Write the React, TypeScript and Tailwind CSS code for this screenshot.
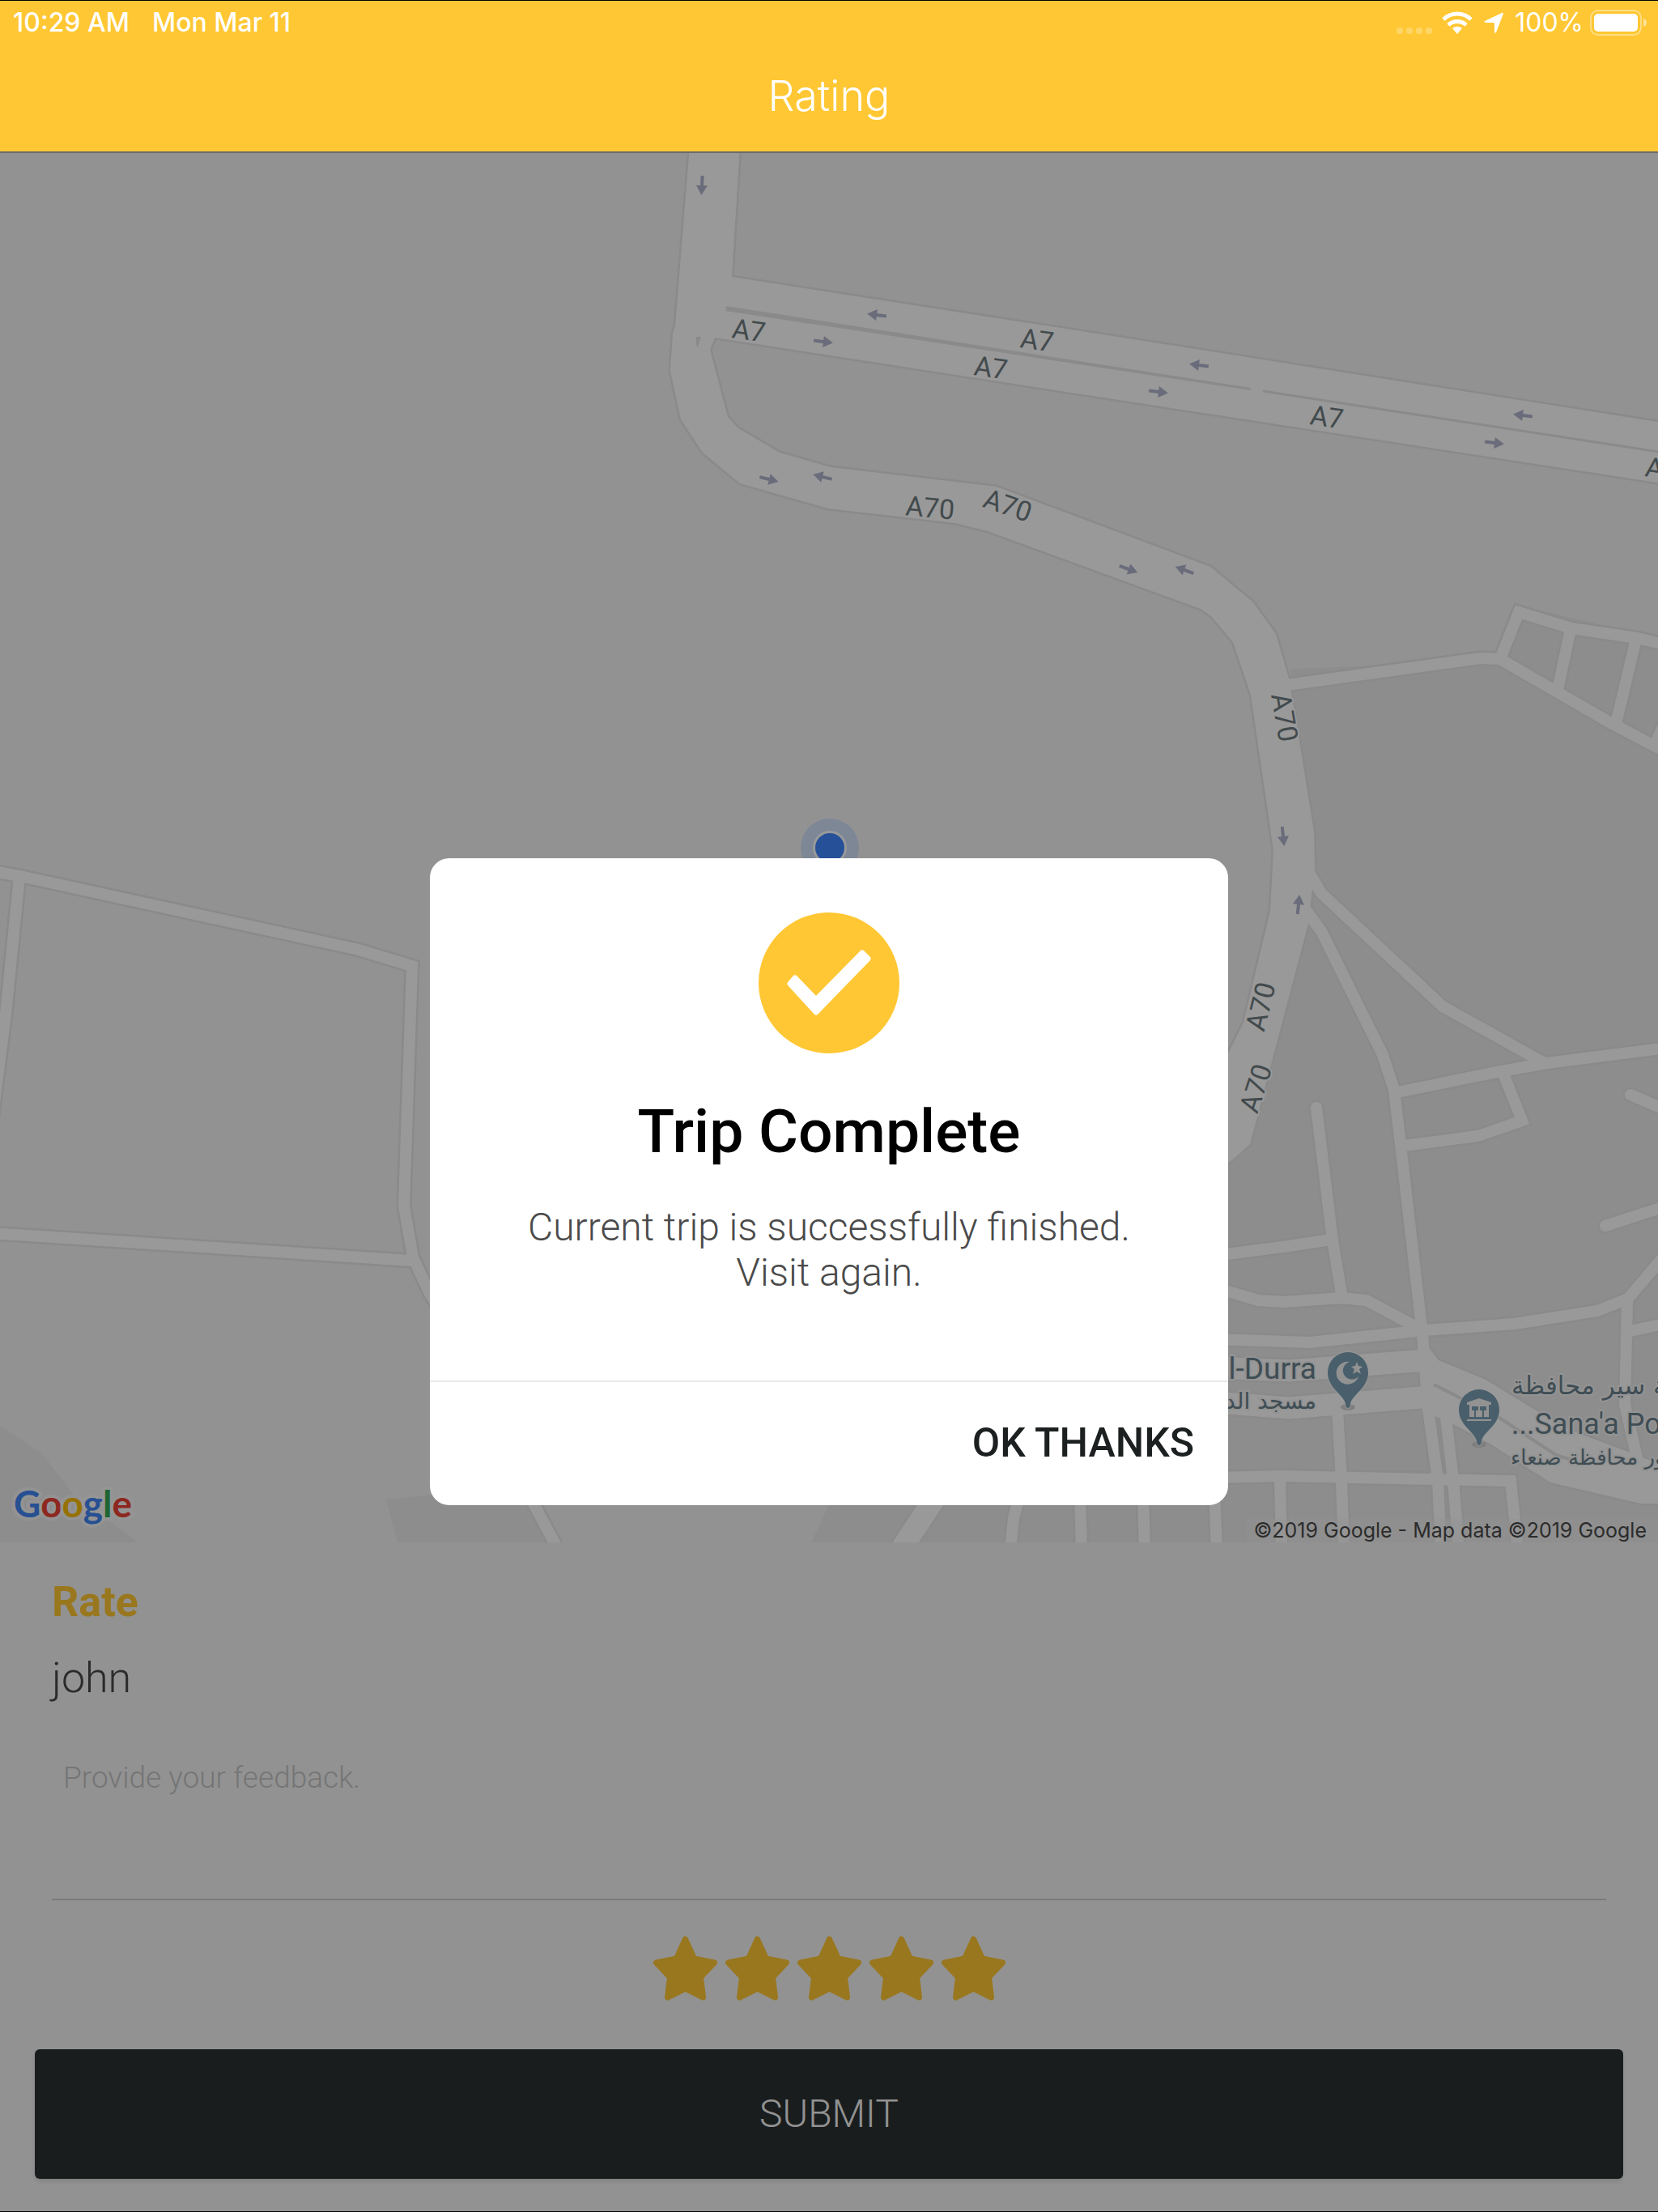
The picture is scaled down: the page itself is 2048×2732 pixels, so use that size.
import { useState } from 'react';

// Minor streets, drawn as a casing line with a white line on top
const streets = [
    'M-10 1076 L25 1082 L443 1173 L509 1193 L499 1489 L510 1553 L531 1598 L570 1660',
    'M24 1082 L7 1253 L-10 1385',
    'M-10 1523 L508 1557',
    'M650 1840 L690 1915',
    'M1582 847 L1828 813 L1853 814 L1988 892 L2060 930',
    'M1853 814 L1876 756 L1941 776 L2022 788 L2060 797',
    'M1940 777 L1924 852',
    'M2021 789 L1996 894',
    'M2062 880 L2044 920',
    'M1610 1066 L1632 1103 L1782 1243 L1906 1312',
    'M1610 1120 L1632 1150 L1708 1303 L1722 1346 L1731 1422 L1757 1648 L1764 1740 L1776 1828 L1780 1915',
    'M1726 1349 L1849 1324 L1911 1313 L2060 1294',
    'M1857 1326 L1880 1384 L1826 1403 L1734 1415',
    'M2014 1352 L2060 1372',
    'M1983 1514 L2060 1489',
    'M1626 1368 L1646 1532 L1658 1604',
    'M1500 1551 L1592 1539 L1644 1531',
    'M1500 1590 L1554 1606 L1585 1608 L1657 1603 L1688 1606 L1757 1643',
    'M1500 1654 L1618 1658 L1759 1643 L1871 1635 L1973 1619 L2011 1604 L2060 1546',
    'M2010 1608 L2007 1735 L2022 1800',
    'M2014 1644 L2060 1634',
    'M1500 1825 L1581 1823 L1866 1829 L1875 1915',
    'M1500 1840 L1503 1915',
    'M1581 1825 L1583 1915',
    'M1652 1740 L1657 1828 L1660 1915',
    'M1786 1750 L1795 1828 L1802 1915',
    'M1260 1845 L1252 1875 L1248 1915',
    'M1334 1845 L1336 1915',
    'M1412 1845 L1414 1915',
];

const avenues = ['M1500 1689 L1592 1693 L1762 1680', 'M1500 1732 L1592 1739 L1768 1725', 'M1165 1835 L1112 1915'];

const highway =
    'M852 180 L834 403 L831 412 L828 458 L841 518 L868 559 L914 597 L1023 628 L1180 646 L1220 656 L1483 752 L1496 761 L1523 793 L1545 858 L1573 1050 L1569 1125 L1536 1263 L1500 1335 L1500 1452 L1544 1413 L1616 1141 L1624 1072 L1623 1027 L1605 916 L1592 838 L1576 783 L1547 743 L1495 700 L1231 601 L1026 577 L963 559 L912 529 L899 515 L877 432 L883 417 L1480 509 L2060 598 L2060 523 L1400 419 L904 342 L914 180 Z';

const lowerHighway =
    'M1750 1668 L1766 1666 L1777 1680 L1835 1704 L1889 1737 L1944 1768 L2016 1795 L2060 1812 L2060 1857 L2027 1857 L1915 1831 L1842 1784 L1795 1759 L1768 1747 Z';

const arrows = [
    [867, 229, 93], [1083, 389, 187], [1017, 422, 7], [1481, 451, 187], [1431, 484, 7],
    [1881, 513, 187], [1846, 547, 7], [950, 592, 14], [1016, 589, 194], [1394, 703, 20],
    [1463, 704, 200], [1585, 1033, 84], [1604, 1117, 276],
];

const roadLabels: [string, number, number, number][] = [
    ['A7', 925, 408, 8], ['A7', 1281, 420, 8], ['A7', 1224, 454, 8], ['A7', 1639, 515, 8], ['A7', 2053, 579, 8],
    ['A70', 1149, 627, 5], ['A70', 1245, 624, 19], ['A70', 1587, 886, 80], ['A70', 1557, 1243, -76], ['A70', 1551, 1344, -72],
];

function Pin({ x, y, children }: { x: number; y: number; children: React.ReactNode }) {
    return (
        <g transform={`translate(${x} ${y})`}>
            <ellipse cx="0" cy="43" rx="9" ry="4" fill="#d2d2d2" />
            <path
                d="M0 44 C-2 44 -3 41 -3 39 C-5 27 -25 20 -25 0 A25 25 0 0 1 25 0 C25 20 5 27 3 39 C3 41 2 44 0 44 Z"
                fill="#7b9eb2"
                stroke="#ffffff"
                strokeOpacity="0.5"
                strokeWidth="3"
                paintOrder="stroke"
            />
            {children}
        </g>
    );
}

function TripMap() {
    return (
        <svg viewBox="0 189 2048 1716" className="block w-full bg-[#f3f3f3] font-[Roboto,sans-serif]" role="img" aria-label="Map of the trip">
            <g fill="#ebebeb">
                <path d="M1594 826 L1681 823 L1850 805 L1876 748 L2048 788 V1905 H1002 L1024 1859 L1400 1700 L1616 1141 Z" />
                <path d="M0 1761 L51 1794 L89 1844 L171 1905 H0 Z" />
                <path d="M477 1852 L560 1844 L655 1850 L686 1905 H491 Z" />
            </g>
            <g fill="none" strokeLinecap="round" strokeLinejoin="miter">
                <g stroke="#e6e6e6">
                    {streets.map((d) => <path key={d} d={d} strokeWidth="19" />)}
                    {avenues.map((d) => <path key={d} d={d} strokeWidth="32" strokeLinecap="butt" />)}
                </g>
                <path d={highway} stroke="#e6e6e6" strokeWidth="5" />
                <path d={lowerHighway} stroke="#e6e6e6" strokeWidth="5" />
                <g stroke="#ffffff">
                    <path d={highway} fill="#ffffff" stroke="none" />
                    <path d={lowerHighway} fill="#ffffff" stroke="none" />
                    {streets.map((d) => <path key={d} d={d} strokeWidth="14" />)}
                    {avenues.map((d) => <path key={d} d={d} strokeWidth="27" strokeLinecap="butt" />)}
                </g>
                <path d="M1771 1710 L1852 1751 L1922 1797 L1950 1806" stroke="#e6e6e6" strokeWidth="4" strokeLinecap="butt" />
                <path d="M1560 483 L2048 558" stroke="#e6e6e6" strokeWidth="3" strokeLinecap="butt" />
                <path d="M897 378 L1545 479 V482 L896 384 Z" fill="#e6e6e6" />
                <path d="M860 416 H866 L862 429 L860 426 Z" fill="#e6e6e6" />
            </g>

            {arrows.map(([x, y, angle]) => (
                <path
                    key={`${x}-${y}`}
                    d="M-12 -2 H0 V-7 L12 0 L0 7 V2 H-12 Z"
                    transform={`translate(${x} ${y}) rotate(${angle})`}
                    fill="#b1b5ce"
                />
            ))}
            <g fontSize="34" fill="#6f7c80" textAnchor="middle" stroke="#ffffff" strokeWidth="4" paintOrder="stroke">
                {roadLabels.map(([name, x, y, angle]) => (
                    <text key={`${x}-${y}`} y="12" transform={`translate(${x} ${y}) rotate(${angle})`}>{name}</text>
                ))}
            </g>

            <Pin x={1665} y={1695}>
                <path d="M13 5 A14 14 0 1 1 2 -13 A11 11 0 1 0 13 5 Z" fill="#f3f3f3" />
                <path d="M11 -13 L13 -8 L18 -7 L14 -4 L16 2 L11 -1 L6 2 L8 -4 L4 -7 L9 -8 Z" fill="#f3f3f3" />
            </Pin>
            <Pin x={1827} y={1741}>
                <g fill="#f3f3f3">
                    <path d="M-15 -9 L0 -14 L15 -9 V-6 H-15 Z" />
                    <path fillRule="evenodd" d="M-12 -6 H12 V9 H-12 Z M-9 -4 V1 H-6 V9 H-4 V1 H-1 V-4 Z M1 -4 V1 H4 V9 H6 V1 H9 V-4 Z" />
                    <path d="M-15 12 H15 V14 H-15 Z" />
                </g>
            </Pin>
            <g fill="#69808c" stroke="#f6f6f6" strokeWidth="4" paintOrder="stroke">
                <text x="1626" y="1703" fontSize="37" textAnchor="end">Al-Durra</text>
                <g className="font-['DejaVu_Sans',sans-serif]" direction="rtl">
                    <text x="1626" y="1740" fontSize="28">مسجد الدرة</text>
                    <text x="1867" y="1722" fontSize="31" textAnchor="end">شرطة سير محافظة</text>
                    <text x="1866" y="1809" fontSize="26" textAnchor="end">مرور محافظة صنعاء</text>
                </g>
                <text x="1867" y="1771" fontSize="36">...Sana'a Po</text>
            </g>

            <circle cx="1025" cy="1047" r="36" fill="#d2e2fb" />
            <circle cx="1025" cy="1047" r="21" fill="#ffffff" />
            <circle cx="1025" cy="1047" r="18" fill="#4088ff" />

            <text x="17" y="1874" fontSize="46" stroke="#ffffff" strokeOpacity="0.5" strokeWidth="8" paintOrder="stroke" className="font-[Lato,sans-serif] font-bold">
                <tspan fill="#4285f4">G</tspan>
                <tspan fill="#ea4335">o</tspan>
                <tspan fill="#fbbc05">o</tspan>
                <tspan fill="#4285f4">g</tspan>
                <tspan fill="#34a853">l</tspan>
                <tspan fill="#ea4335">e</tspan>
            </text>
            <rect x="1540" y="1876" width="508" height="29" fill="#f5f5f5" fillOpacity="0.4" />
            <text x="2034" y="1899" fontSize="25" textAnchor="end" fill="#4a4a4a" className="font-[Inter,sans-serif]">
                ©2019 Google - Map data ©2019 Google
            </text>
        </svg>
    );
}

function StatusBar() {
    return (
        <div className="flex h-[52px] items-center justify-between pt-1 pl-4 pr-3.5 pb-0.5 font-medium">
            <div className="flex gap-7 text-[32px]">
                <span>10:29 AM</span>
                <span>Mon Mar 11</span>
            </div>
            <div className="flex items-center text-[32px] font-normal">
                <svg width="44" height="28" viewBox="0 0 44 28" fill="#fff" fillOpacity="0.25" className="mr-3">
                    <rect x="0" y="20" width="8" height="8" rx="3" />
                    <rect x="12" y="20" width="8" height="8" rx="3" />
                    <rect x="24" y="20" width="8" height="8" rx="3" />
                    <rect x="36" y="20" width="8" height="8" rx="3" />
                </svg>
                <svg width="38" height="28" viewBox="0 0 38 28" fill="none" stroke="#fff" strokeWidth="5" className="mr-3.5">
                    <path d="M2 10 A24 24 0 0 1 36 10" />
                    <path d="M8 17 A16 16 0 0 1 30 17" />
                    <path d="M19 28 L13 21 A9 9 0 0 1 25 21 Z" fill="#fff" stroke="none" />
                </svg>
                <svg width="24" height="26" viewBox="0 0 24 26" fill="#fff" className="mr-3.5">
                    <path d="M22 1 Q24 0 24 2 L15 25 Q13 27 13 24 V14 Q13 13 12 13 H2 Q-1 12 1 11 Z" />
                </svg>
                <span className="mr-2">100%</span>
                <svg width="70" height="32" viewBox="0 0 70 32">
                    <rect x="1" y="1" width="62" height="30" rx="9" fill="none" stroke="#fff" strokeOpacity="0.4" strokeWidth="2" />
                    <rect x="5" y="5" width="54" height="22" rx="5" fill="#fff" />
                    <path d="M66 11 Q70 12 70 16 Q70 20 66 21 Z" fill="#fff" fillOpacity="0.5" />
                </svg>
            </div>
        </div>
    );
}

export default function App() {
    const [rating, setRating] = useState(5);
    const [feedback, setFeedback] = useState('');
    const [showModal, setShowModal] = useState(true);

    return (
        <div className="flex min-h-screen flex-col bg-[#f4f4f4] font-[Roboto,sans-serif]">
            <header className="border-t border-black border-b-2 border-b-[#6b6b6b] bg-[#ffc733] font-[Inter,sans-serif] text-white">
                <StatusBar />
                <h1 className="flex h-[134px] items-center justify-center pb-0.5 text-[52px] font-light">Rating</h1>
            </header>

            <main className="relative flex flex-1 flex-col border-b border-black">
                <TripMap />

                <form className="flex flex-1 flex-col pt-11 pb-10" onSubmit={(e) => e.preventDefault()}>
                    <div className="flex flex-col px-16">
                        <h2 className="text-[52px] leading-[60px] font-bold text-[#ffc733]">Rate</h2>
                        <p className="mt-[34px] text-[52px] leading-[60px] font-light text-[#484848]">john</p>
                        <textarea
                            aria-label="Feedback"
                            placeholder="Provide your feedback."
                            value={feedback}
                            onChange={(e) => setFeedback(e.target.value)}
                            className="mt-[50px] h-[194px] resize-none border-b-2 border-[#cbcbcb] px-3.5 py-5 text-[37px] leading-[46px] font-light text-[#484848] outline-none placeholder:text-[#c4c4c4]"
                        />
                    </div>
                    <div className="mt-11 flex justify-center gap-2">
                        {[1, 2, 3, 4, 5].map((n) => (
                            <button key={n} type="button" aria-label={`${n} stars`} onClick={() => setRating(n)}>
                                <svg width="81" height="80" viewBox="0 0 80 80" fill={n <= rating ? '#ffc733' : 'none'} stroke="#ffc733" strokeWidth="7" strokeLinejoin="round">
                                    <path d="M40 4 L51 28 L76 33 L59 51 L62 76 L40 65 L18 76 L21 51 L4 33 L29 28 Z" />
                                </svg>
                            </button>
                        ))}
                    </div>
                    <button type="submit" className="mx-[43px] mt-auto h-40 rounded-md bg-[#2b3132] text-[48px] font-light text-[#f4f4f4] shadow-md">
                        SUBMIT
                    </button>
                </form>

                {showModal && (
                    <div className="absolute inset-0 flex items-center justify-center bg-black/40 pb-0.5">
                        <div role="dialog" aria-modal="true" aria-labelledby="modal-title" className="w-[986px] max-w-full overflow-hidden rounded-3xl bg-white">
                            <div className="flex flex-col items-center px-16 pt-[67px] pb-[105px] text-center">
                                <svg width="174" height="174" viewBox="0 0 174 174">
                                    <circle cx="87" cy="87" r="87" fill="#ffc733" />
                                    <path
                                        d="M128 50 L135 57 L71 123 L39 88 L45 81 L71 108 Z"
                                        fill="#fff"
                                        stroke="#fff"
                                        strokeWidth="7"
                                        strokeLinejoin="round"
                                    />
                                </svg>
                                <h2 id="modal-title" className="mt-[51px] text-[75px] leading-[90px] font-medium text-black">Trip Complete</h2>
                                <p className="mt-[46px] text-[48px] leading-[56px] font-light text-[#4a4a4a]">
                                    Current trip is successfully finished.
                                    <br />
                                    Visit again.
                                </p>
                            </div>
                            <div className="flex h-[154px] items-center justify-end border-t-2 border-[#e9e9e9] px-[42px]">
                                <button type="button" onClick={() => setShowModal(false)} className="text-[50px] font-medium text-[#1d2021]">
                                    OK THANKS
                                </button>
                            </div>
                        </div>
                    </div>
                )}
            </main>
        </div>
    );
}
